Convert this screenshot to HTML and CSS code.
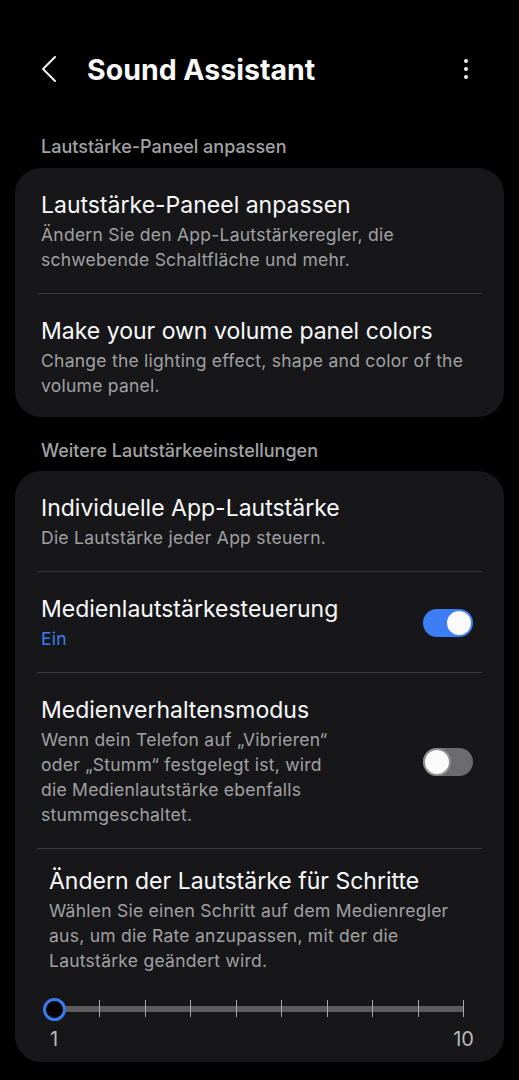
FILE: index.html
```html
<!DOCTYPE html>
<html lang="de">
<head>
    <meta charset="UTF-8">
    <meta name="viewport" content="width=device-width, initial-scale=1.0">
    <title>Sound Assistant</title>
    <link rel="stylesheet" href="styles.css">
</head>
<body>
    <header class="app-bar">
        <svg class="back-icon" width="20" height="30" viewBox="0 0 20 30">
            <polyline points="15,3 3,15 15,27" fill="none" stroke="#f2f2f2" stroke-width="2" stroke-linecap="round" stroke-linejoin="round"/>
        </svg>
        <h1 class="app-title">Sound Assistant</h1>
        <div class="more-icon">
            <span></span><span></span><span></span>
        </div>
    </header>

    <div class="section-label first">Lautstärke-Paneel anpassen</div>
    <div class="card">
        <div class="item">
            <div class="item-text">
                <div class="item-title">Lautstärke-Paneel anpassen</div>
                <div class="item-sub">Ändern Sie den App-Lautstärkeregler, die<br>schwebende Schaltfläche und mehr.</div>
            </div>
        </div>
        <div class="item">
            <div class="item-text">
                <div class="item-title">Make your own volume panel colors</div>
                <div class="item-sub">Change the lighting effect, shape and color of the<br>volume panel.</div>
            </div>
        </div>
    </div>

    <div class="section-label">Weitere Lautstärkeeinstellungen</div>
    <div class="card">
        <div class="item">
            <div class="item-text">
                <div class="item-title">Individuelle App-Lautstärke</div>
                <div class="item-sub">Die Lautstärke jeder App steuern.</div>
            </div>
        </div>
        <div class="item">
            <div class="item-text">
                <div class="item-title">Medienlautstärkesteuerung</div>
                <div class="item-sub item-on">Ein</div>
            </div>
            <div class="switch switch-on"><span class="knob"></span></div>
        </div>
        <div class="item">
            <div class="item-text">
                <div class="item-title">Medienverhaltensmodus</div>
                <div class="item-sub">Wenn dein Telefon auf „Vibrieren“<br>oder „Stumm“ festgelegt ist, wird<br>die Medienlautstärke ebenfalls<br>stummgeschaltet.</div>
            </div>
            <div class="switch"><span class="knob"></span></div>
        </div>
        <div class="item item-steps">
            <div class="item-text">
                <div class="item-title">Ändern der Lautstärke für Schritte</div>
                <div class="item-sub">Wählen Sie einen Schritt auf dem Medienregler<br>aus, um die Rate anzupassen, mit der die<br>Lautstärke geändert wird.</div>
            </div>
        </div>
        <div class="slider-block">
            <div class="slider">
                <div class="track"></div>
                <div class="ticks">
                    <span></span><span></span><span></span><span></span><span></span>
                    <span></span><span></span><span></span><span></span><span></span>
                </div>
                <div class="thumb"></div>
            </div>
            <div class="slider-labels">
                <span>1</span>
                <span>10</span>
            </div>
        </div>
    </div>
</body>
</html>
```

FILE: styles.css
```css
body {
    margin: 0;
    background-color: #000;
    color: #fafafa;
    font-family: Inter, Roboto, sans-serif;
    width: 519px;
}
.app-bar {
    display: flex;
    align-items: center;
    height: 60px;
    padding: 39px 0 0 40px;
}
.back-icon {
    display: block;
}
.app-title {
    margin: 0 0 0 27px;
    font-size: 28.5px;
    font-weight: 700;
    flex: 1;
}
.more-icon {
    display: flex;
    flex-direction: column;
    gap: 4px;
    margin-right: 51px;
}
.more-icon span {
    width: 4px;
    height: 4px;
    border-radius: 50%;
    background-color: #f2f2f2;
}
.section-label {
    padding: 22px 0 0 41px;
    height: 32px;
    font-size: 18px;
    line-height: 24px;
    font-weight: 500;
    color: #a3a3a5;
}
.section-label.first {
    padding-top: 36px;
    height: 33px;
}
.card {
    margin: 0 15px;
    padding: 0 22px;
    background-color: #17171a;
    border-radius: 26px;
}
.item {
    display: flex;
    align-items: center;
    padding: 23px 0 21px 4px;
    border-bottom: 1px solid #38383b;
}
.card > .item:last-child {
    border-bottom: none;
    padding-bottom: 19px;
}
.item-text {
    flex: 1;
}
.item-title {
    font-size: 23px;
    line-height: 28px;
    color: #fafafa;
}
.item-sub {
    margin-top: 3px;
    font-size: 17.5px;
    line-height: 25px;
    letter-spacing: 0.25px;
    color: #a1a1a3;
}
.item-on {
    color: #3e7cf2;
}
.switch {
    position: relative;
    width: 50px;
    height: 28px;
    margin-right: 9px;
    border-radius: 14px;
    background-color: #6c6c70;
}
.switch .knob {
    position: absolute;
    top: 0;
    left: 0;
    width: 24px;
    height: 24px;
    border: 2px solid #8e8e92;
    border-radius: 50%;
    background-color: #fafafa;
}
.switch-on {
    background-color: #3d7ef5;
}
.switch-on .knob {
    top: 2px;
    left: 24px;
    border: none;
}
.item-steps {
    padding-top: 18px;
    padding-left: 12px;
    border-bottom: none;
    padding-bottom: 0;
}
.slider-block {
    padding: 25px 0 10px 0;
}
.slider {
    position: relative;
    height: 22px;
    margin: 0 18px 0 17px;
}
.track {
    position: absolute;
    left: 0;
    right: 0;
    top: 8px;
    height: 6px;
    background-color: #5c5c5e;
}
.ticks {
    position: absolute;
    left: 0;
    right: 0;
    top: 2px;
    display: flex;
    justify-content: space-between;
}
.ticks span {
    width: 1px;
    height: 17px;
    background-color: #a8a8aa;
}
.thumb {
    position: absolute;
    left: -11px;
    top: 0;
    width: 17px;
    height: 17px;
    border: 3px solid #3a7bf0;
    border-radius: 50%;
    background-color: #000;
}
.slider-labels {
    display: flex;
    justify-content: space-between;
    margin: 6px 8px 0 13px;
    font-size: 20px;
    line-height: 26px;
    color: #b8b8ba;
}
```
